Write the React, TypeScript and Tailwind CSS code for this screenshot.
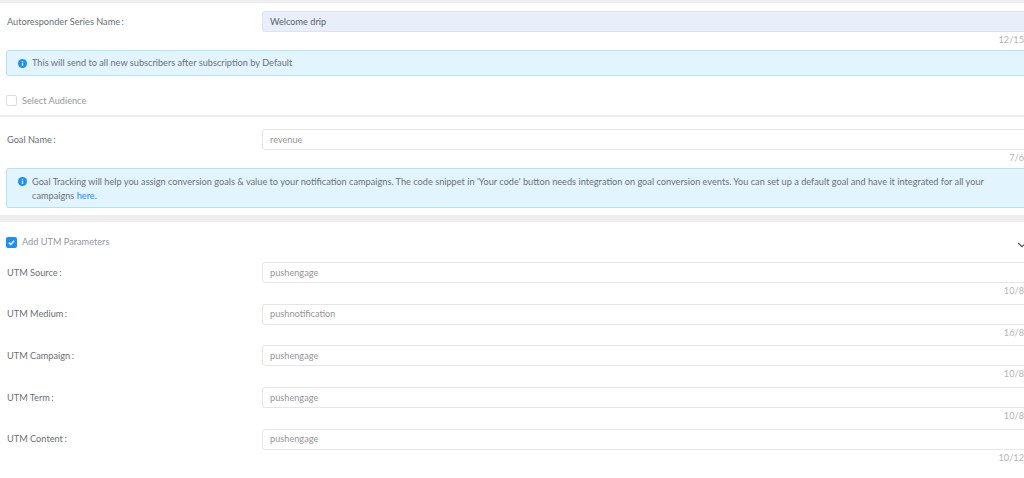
import { ChevronDown } from "lucide-react";

const UTM_FIELDS = [
  { label: "UTM Source", value: "pushengage", count: "10/8" },
  { label: "UTM Medium", value: "pushnotification", count: "16/8" },
  { label: "UTM Campaign", value: "pushengage", count: "10/8" },
  { label: "UTM Term", value: "pushengage", count: "10/8" },
  { label: "UTM Content", value: "pushengage", count: "10/12" },
];

const InfoDot = ({ className }: { className: string }) => (
  <svg viewBox="0 0 10 10" className={className}>
    <circle cx="5" cy="5" r="5" fill="#1890ff" />
    <rect x="4.3" y="4.2" width="1.4" height="3.6" fill="white" />
    <rect x="4.3" y="2.2" width="1.4" height="1.3" fill="white" />
  </svg>
);

const Field = ({
  label,
  value,
  count,
  filled,
}: {
  label: string;
  value: string;
  count: string;
  filled?: boolean;
}) => {
  return (
    <div className="flex flex-col">
      <div className="flex items-center">
        <label className="w-[262px] pl-[7px] text-[9.2px] text-[#6b6f75]">
          {label}
          <span className="ml-[1.5px]">:</span>
        </label>
        <div
          className={
            filled
              ? "flex-1 h-[21px] flex items-center pl-[7px] rounded-[3px] border border-[#dfe3ec] bg-[#e8effb] text-[9.2px] text-[#5c6066]"
              : "flex-1 h-[21px] flex items-center pl-[7px] rounded-[3px] border border-[#e6e6e6] bg-white text-[9.2px] text-[#969696]"
          }
        >
          {value}
        </div>
      </div>
      <div className="h-[18px] pt-[2px] text-right text-[9.2px] leading-[12px] text-[#b5b5b5] pr-[6px]">
        {count}
      </div>
    </div>
  );
};

const App = () => {
  return (
    <div className="w-[1024px] h-[478px] overflow-hidden bg-white font-['Lato','Noto_Sans',sans-serif]">
      <div className="w-[1030px]">
        <div className="h-[3px] bg-[#eeeeee]" />
        <div className="pt-[8px]">
          <Field label="Autoresponder Series Name" value="Welcome drip" count="12/15" filled />
        </div>
        <div className="ml-[6px] h-[26px] flex items-center gap-[5px] pl-[11px] rounded-[3px] border border-[#b3e3fb] bg-[#e2f5fe] text-[9.2px] text-[#6b7177]">
          <InfoDot className="w-[9px] h-[9px]" />
          This will send to all new subscribers after subscription by Default
        </div>
        <div className="h-[41px] pt-[10px] flex items-center gap-[5px] pl-[6px] text-[9.2px] text-[#94989d] border-b-2 border-[#eeeeee]">
          <span className="w-[11px] h-[11px] rounded-[2px] border border-[#dddddd] bg-white" />
          Select Audience
        </div>
        <div className="pt-[12px]">
          <Field label="Goal Name" value="revenue" count="7/6" />
        </div>
        <div className="ml-[6px] h-[40px] flex items-start gap-[5px] pl-[11px] pt-[6px] pr-[10px] rounded-[3px] border border-[#b3e3fb] bg-[#e2f5fe] text-[9.2px] leading-[14px] text-[#6b7177]">
          <InfoDot className="w-[9px] h-[9px] mt-[2px] shrink-0" />
          <p className="w-[975px]">
            Goal Tracking will help you assign conversion goals &amp; value to your notification campaigns. The code snippet in 'Your code' button needs integration on goal conversion events. You can set up a default goal and have it integrated for all your campaigns{" "}
            <span className="text-[#1890ff]">here</span>.
          </p>
        </div>
        <div className="mt-[7px] h-[7px] bg-[#eeeeee]" />
        <div className="h-[40px] flex items-center gap-[5px] pl-[6px] text-[9.2px] text-[#94989d]">
          <span className="w-[11px] h-[11px] rounded-[2px] bg-[#1890ff] flex items-center justify-center">
            <svg viewBox="0 0 12 12" className="w-[9px] h-[9px]" fill="none" stroke="white" strokeWidth="2">
              <path d="M2.5 6.2 5 8.6l4.5-5" />
            </svg>
          </span>
          Add UTM Parameters
          <ChevronDown className="ml-auto mr-[1px] mt-[6px] w-[14px] h-[14px] text-[#555555]" />
        </div>
        <div className="flex flex-col gap-[2.7px]">
          {UTM_FIELDS.map((f) => (
            <Field key={f.label} label={f.label} value={f.value} count={f.count} />
          ))}
        </div>
      </div>
    </div>
  );
};

export default App;
